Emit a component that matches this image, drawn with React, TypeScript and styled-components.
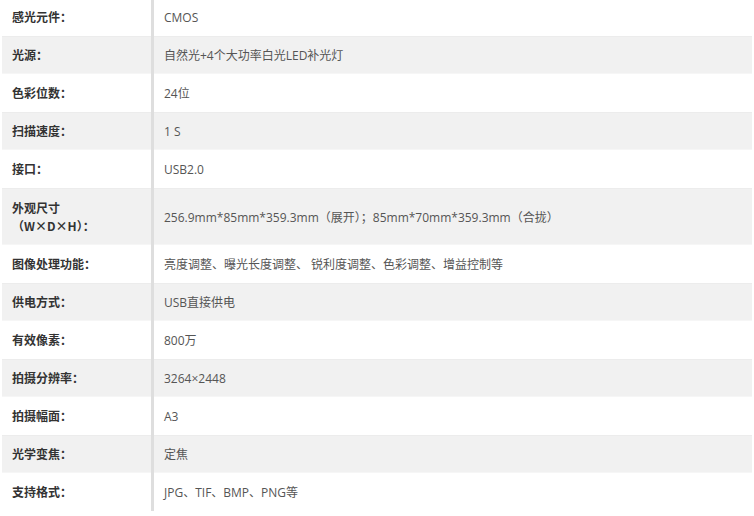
import React from "react";
import styled, { createGlobalStyle } from "styled-components";

const Global = createGlobalStyle`
  html, body { margin: 0; padding: 0; background: #fff; }
  body { font-family: "Open Sans", "Noto Sans CJK SC", sans-serif; }
`;

const Table = styled.div`
  margin: -2px 0 0 2px;
  width: 750px;
  display: flex;
  flex-direction: column;
`;

const Row = styled.div<{ $striped: boolean; $tall?: boolean }>`
  display: flex;
  height: ${(p) => (p.$tall ? 57 : 38)}px;
  background: ${(p) => (p.$striped ? "#f1f1f1" : "#fff")};
  box-shadow: ${(p) =>
    p.$striped ? "inset 0 1px 0 #ececec, inset 0 -1px 0 #f6f6f6" : "none"};
`;

const Label = styled.div`
  width: 139px;
  padding-left: 10px;
  border-right: 3px solid #dedede;
  display: flex;
  align-items: center;
  font-family: "Noto Sans CJK SC", sans-serif;
  font-weight: 700;
  font-size: 12px;
  line-height: 18px;
  color: #333;
`;

const Value = styled.div`
  flex: 1;
  padding-left: 10px;
  display: flex;
  align-items: center;
  font-family: "Open Sans", "Noto Sans CJK SC", sans-serif;
  font-size: 12px;
  color: #555;
  white-space: pre;
`;

type Spec = { label: React.ReactNode; value: string; tall?: boolean };

const specs: Spec[] = [
  { label: "感光元件：", value: "CMOS" },
  { label: "光源：", value: "自然光+4个大功率白光LED补光灯" },
  { label: "色彩位数：", value: "24位" },
  { label: "扫描速度：", value: "1 S" },
  { label: "接口：", value: "USB2.0" },
  {
    label: (
      <span>
        外观尺寸
        <br />（W×D×H）：
      </span>
    ),
    value: "256.9mm*85mm*359.3mm（展开）；85mm*70mm*359.3mm（合拢）",
    tall: true,
  },
  { label: "图像处理功能：", value: "亮度调整、曝光长度调整、 锐利度调整、色彩调整、增益控制等" },
  { label: "供电方式：", value: "USB直接供电" },
  { label: "有效像素：", value: "800万" },
  { label: "拍摄分辨率：", value: "3264×2448" },
  { label: "拍摄幅面：", value: "A3" },
  { label: "光学变焦：", value: "定焦" },
  { label: "支持格式：", value: "JPG、TIF、BMP、PNG等" },
];

export default function App() {
  return (
    <>
      <Global />
      <Table>
        {specs.map((s, i) => (
          <Row key={i} $striped={i % 2 === 1} $tall={s.tall}>
            <Label>{s.label}</Label>
            <Value>{s.value}</Value>
          </Row>
        ))}
      </Table>
    </>
  );
}
